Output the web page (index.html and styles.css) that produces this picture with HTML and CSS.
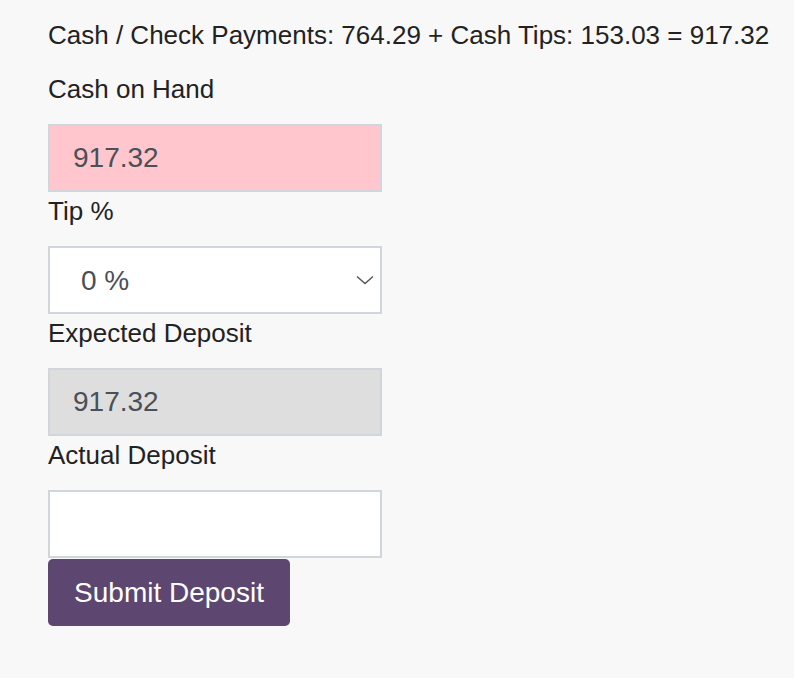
FILE: index.html
```html
<!DOCTYPE html>
<html lang="en">

<head>
    <meta charset="UTF-8">
    <title>Deposit</title>
    <link rel="stylesheet" href="styles.css">
</head>

<body>

    <div class="deposit">
        <p class="summary">Cash / Check Payments: 764.29 + Cash Tips: 153.03 = 917.32</p>

        <label for="cashOnHand">Cash on Hand</label>
        <input type="text" id="cashOnHand" class="field short" value="917.32">

        <label for="tipPercent">Tip %</label>
        <div class="select-wrap">
            <select id="tipPercent" class="field">
                <option>0 %</option>
                <option>5 %</option>
                <option>10 %</option>
            </select>
            <svg class="chevron" width="18" height="10" viewBox="0 0 18 10">
                <path d="M1 1.5 L9 8.5 L17 1.5" fill="none" stroke="#555" stroke-width="1.4" />
            </svg>
        </div>

        <label for="expected">Expected Deposit</label>
        <input type="text" id="expected" class="field readonly" value="917.32" readonly>

        <label for="actual">Actual Deposit</label>
        <input type="text" id="actual" class="field">

        <button class="submit">Submit Deposit</button>
    </div>

</body>

</html>
```

FILE: styles.css
```css
body {
    margin: 0;
    background: #f8f8f8;
    font-family: 'Liberation Sans', Arial, sans-serif;
    color: #222;
}

.deposit {
    padding: 20px 0 20px 48px;
}

.summary {
    margin: 0 0 24px;
    font-size: 26px;
    line-height: 30px;
    white-space: nowrap;
}

label {
    display: block;
    font-size: 26px;
    line-height: 30px;
    margin: 4px 0 20px;
}

.summary + label {
    margin-top: 0;
}

.field {
    display: block;
    box-sizing: border-box;
    width: 334px;
    height: 68px;
    margin: 0;
    padding: 0 23px;
    border: 2px solid #d1d6dc;
    border-radius: 0;
    background: #fff;
    color: #495057;
    font-family: 'Liberation Sans', Arial, sans-serif;
    font-size: 28px;
    outline: none;
}

.short {
    background: #ffc6cd;
}

.readonly {
    background: #dedede;
}

.select-wrap {
    position: relative;
    width: 334px;
}

select.field {
    appearance: none;
    -webkit-appearance: none;
    padding-left: 31px;
}

.chevron {
    position: absolute;
    right: 8px;
    top: 29px;
}

.submit {
    display: block;
    margin-top: 1px;
    width: 242px;
    height: 67px;
    padding: 0;
    border: none;
    border-radius: 5px;
    background: #5d466f;
    color: #fff;
    font-family: 'Liberation Sans', Arial, sans-serif;
    font-size: 28px;
    cursor: pointer;
}
```
